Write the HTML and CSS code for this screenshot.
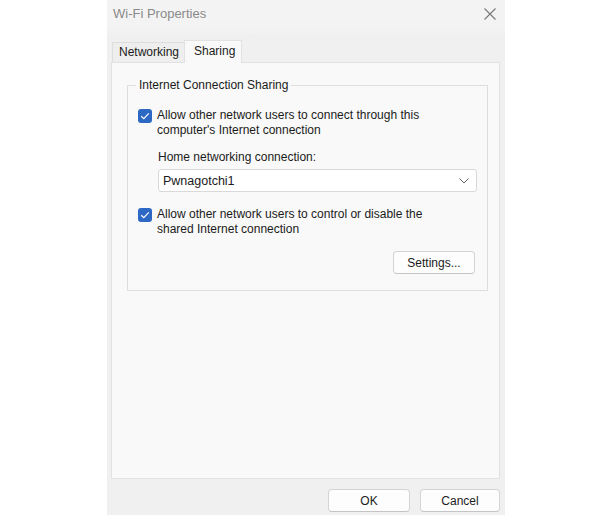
FILE: index.html
```html
<!DOCTYPE html>
<html>
<head>
<meta charset="utf-8">
<link rel="stylesheet" href="styles.css">
</head>
<body>
<div class="dialog">
  <div class="titlebar">
    <span class="title">Wi-Fi Properties</span>
    <svg class="close" width="12" height="12" viewBox="0 0 12 12"><path d="M0.5 0.5 L11.5 11.5 M11.5 0.5 L0.5 11.5" stroke="#777" stroke-width="1.1" fill="none"/></svg>
  </div>
  <div class="tabs">
    <div class="tab">Networking</div>
    <div class="tab active">Sharing</div>
  </div>
  <div class="panel">
    <fieldset class="group">
      <legend>Internet Connection Sharing</legend>
      <div class="check-row">
        <span class="checkbox"><svg width="10" height="8" viewBox="0 0 10 8"><path d="M1.2 4.2 L3.8 6.6 L8.8 1.4" stroke="#fff" stroke-width="1.2" fill="none"/></svg></span>
        <span class="label">Allow other network users to connect through this<br>computer's Internet connection</span>
      </div>
      <div class="sub">
        <div class="sub-label">Home networking connection:</div>
        <div class="select">
          <span>Pwnagotchi1</span>
          <svg width="10" height="6" viewBox="0 0 10 6"><path d="M0.5 0.5 L5 5 L9.5 0.5" stroke="#666" stroke-width="1" fill="none"/></svg>
        </div>
      </div>
      <div class="check-row second">
        <span class="checkbox"><svg width="10" height="8" viewBox="0 0 10 8"><path d="M1.2 4.2 L3.8 6.6 L8.8 1.4" stroke="#fff" stroke-width="1.2" fill="none"/></svg></span>
        <span class="label">Allow other network users to control or disable the<br>shared Internet connection</span>
      </div>
      <div class="settings-row">
        <button class="btn settings">Settings...</button>
      </div>
    </fieldset>
  </div>
  <div class="footer">
    <button class="btn ok">OK</button>
    <button class="btn cancel">Cancel</button>
  </div>
</div>
</body>
</html>
```
FILE: styles.css
```css
html, body {
  margin: 0;
  padding: 0;
  background: #ffffff;
}
body {
  font-family: "Liberation Sans", Arial, sans-serif;
  font-size: 12px;
  color: #1b1b1b;
}
.dialog {
  margin-left: 107px;
  width: 398px;
  height: 515px;
  background: #f0f0f0;
  display: flex;
  flex-direction: column;
}
.titlebar {
  height: 39px;
  display: flex;
  align-items: flex-start;
  justify-content: space-between;
  padding: 0 9px 0 6px;
  box-sizing: border-box;
  background: linear-gradient(#f3f3f3 0, #f3f3f3 28px, #eeeeee 39px);
}
.title {
  margin-top: 6px;
  font-size: 13px;
  color: #8a8a8a;
}
.close {
  margin-top: 8px;
}
.tabs {
  display: flex;
  align-items: flex-end;
  height: 23px;
  padding-left: 5px;
}
.tab {
  height: 20px;
  line-height: 19px;
  padding: 0 5px 0 6px;
  border: 1px solid #dddddd;
  border-bottom: none;
  background: #eeeeee;
  box-sizing: border-box;
  width: 73px;
  margin-bottom: 0;
}
.tab.active {
  width: 58px;
  height: 23px;
  line-height: 20px;
  padding-left: 9px;
  background: #f9f9f9;
  border-color: #e2e2e2;
  margin-left: -1px;
  margin-bottom: -1px;
  position: relative;
  z-index: 1;
}
.panel {
  margin-left: 4px;
  width: 389px;
  height: 417px;
  background: #f9f9f9;
  border: 1px solid #e2e2e2;
  box-sizing: border-box;
  padding: 15px 12px 0 15px;
}
.group {
  margin: 0;
  border: 1px solid #dedede;
  padding: 8px 10px 14px 10px;
  height: 213px;
  box-sizing: border-box;
}
legend {
  padding: 0 3px 0 3px;
  margin-left: -2px;
  color: #1b1b1b;
}
.check-row {
  display: flex;
  align-items: flex-start;
  margin-top: 8px;
}
.checkbox {
  width: 14px;
  height: 14px;
  border-radius: 3px;
  background: #2c68c4;
  display: flex;
  align-items: center;
  justify-content: center;
  flex: none;
  margin-top: 1px;
  margin-right: 5px;
}
.label {
  line-height: 15px;
}
.sub {
  margin-left: 20px;
  margin-top: 12px;
}
.sub-label {
  line-height: 15px;
}
.select {
  margin-top: 4px;
  width: 319px;
  height: 23px;
  box-sizing: border-box;
  border: 1px solid #d9d9d9;
  border-radius: 3px;
  background: #ffffff;
  display: flex;
  align-items: center;
  justify-content: space-between;
  padding: 0 7px 0 4px;
  font-size: 12.5px;
}
.check-row.second {
  margin-top: 15px;
}
.settings-row {
  display: flex;
  justify-content: flex-end;
  margin-top: 14px;
  margin-right: 2px;
}
.btn {
  font-family: "Liberation Sans", Arial, sans-serif;
  font-size: 12px;
  color: #1b1b1b;
  background: #fdfdfd;
  border: 1px solid #d4d4d4;
  border-bottom-color: #c4c4c4;
  border-radius: 4px;
  height: 23px;
  padding: 0;
  box-sizing: border-box;
}
.settings {
  width: 82px;
}
.footer {
  display: flex;
  justify-content: flex-end;
  gap: 10px;
  padding: 10px 5px 0 0;
}
.ok {
  width: 82px;
}
.cancel {
  width: 80px;
}
```
